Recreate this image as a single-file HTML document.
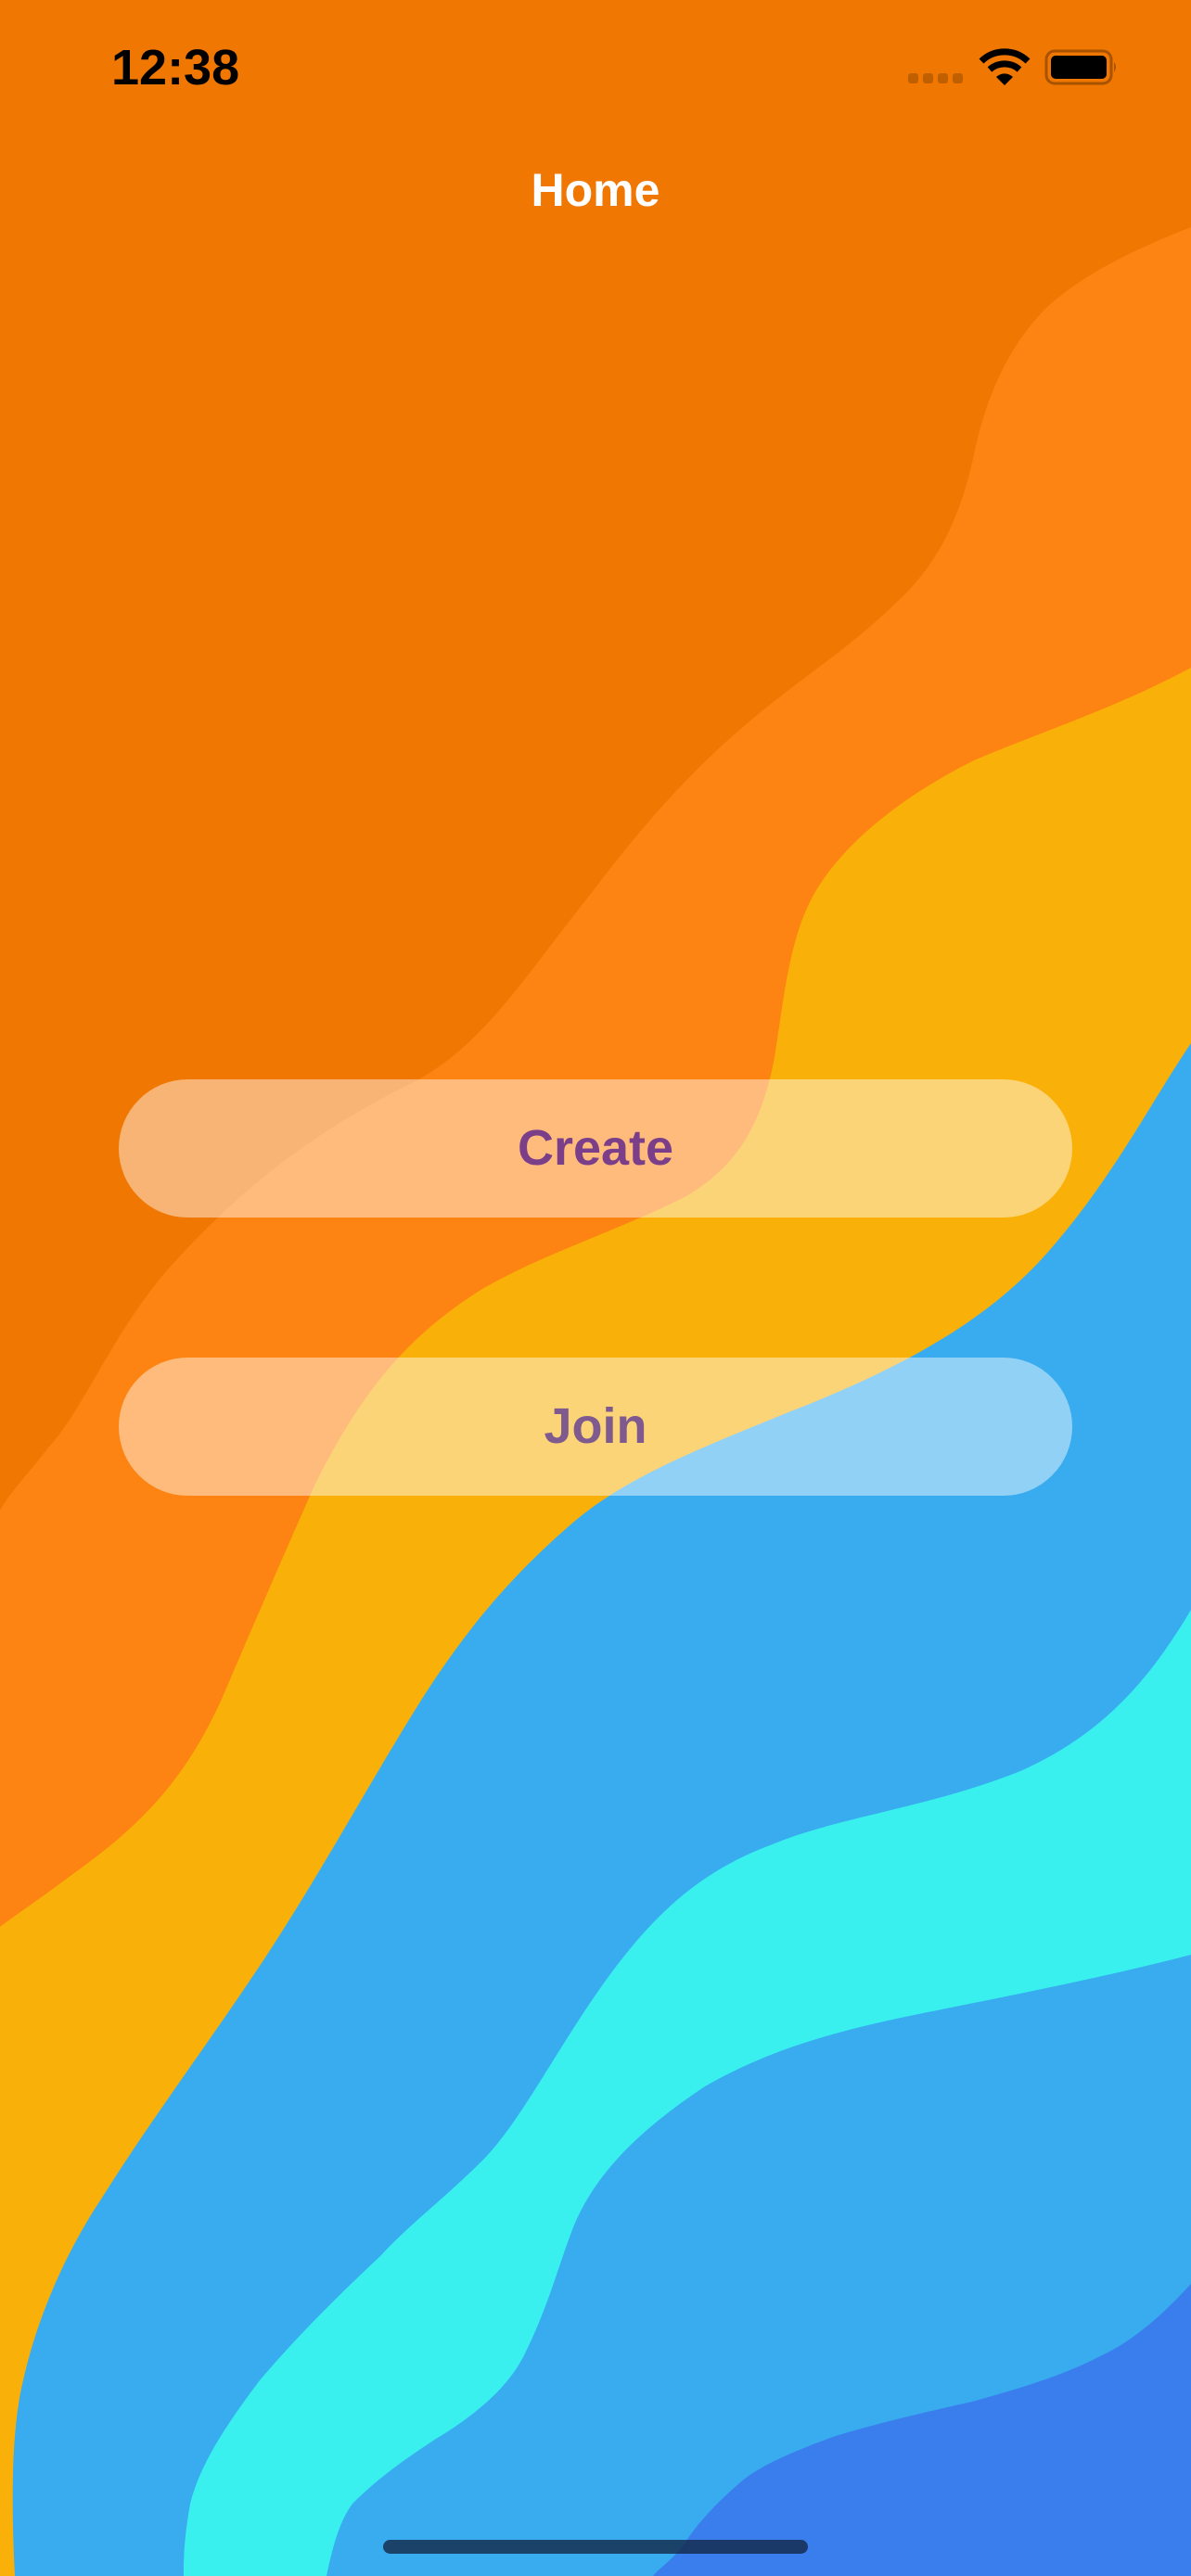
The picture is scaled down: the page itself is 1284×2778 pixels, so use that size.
<!DOCTYPE html>
<html><head><meta charset="utf-8"><style>
html,body{margin:0;padding:0}
body{width:1284px;height:2778px;position:relative;overflow:hidden;background:#F07702;font-family:"Liberation Sans",sans-serif}
svg.bg{position:absolute;left:0;top:0}
.time{position:absolute;left:120px;top:42px;font-size:54px;font-weight:bold;color:#000}
.title{position:absolute;left:0;width:1284px;top:176px;text-align:center;font-size:50px;font-weight:bold;color:#fff}
.btn{position:absolute;left:128px;width:1028px;height:149px;border-radius:75px;background:rgba(255,255,255,0.45);text-align:center;line-height:149px;font-size:54px;font-weight:bold}
.home{position:absolute;left:413px;top:2739px;width:458px;height:15px;border-radius:8px;background:rgba(20,40,70,0.8)}
</style></head><body>
<svg class="bg" width="1284" height="2778" viewBox="0 0 1284 2778">
<path fill="#FD8412" d="M1284,245 C1220,270 1170,295 1130,330 C1090,370 1065,420 1050,490 C1035,560 1010,610 966,650 C920,695 880,720 830,760 C760,815 700,880 640,960 C560,1060 520,1130 440,1170 C340,1220 260,1280 180,1370 C120,1440 90,1520 53,1560 C30,1590 10,1610 0,1629 L0,2778 L1284,2778 Z"/>
<path fill="#F9B10A" d="M1284,720 C1200,765 1120,790 1050,820 C970,860 910,910 880,960 C850,1010 845,1080 835,1140 C820,1220 790,1260 740,1290 C660,1330 590,1350 520,1390 C440,1440 390,1500 340,1600 C300,1690 270,1760 240,1830 C200,1920 150,1970 80,2020 C40,2050 10,2070 0,2078 L0,2778 L1284,2778 Z"/>
<path fill="#39ABEF" d="M1284,1125 C1240,1190 1200,1270 1130,1350 C1060,1430 960,1480 850,1523 C760,1560 680,1590 620,1640 C550,1700 500,1760 450,1840 C400,1920 340,2030 280,2120 C220,2210 160,2290 110,2370 C70,2430 40,2500 25,2567 C12,2620 12,2700 16,2778 L1284,2778 Z"/>
<path fill="#39F0EF" d="M1284,1736 C1240,1810 1190,1870 1100,1910 C1000,1950 900,1960 830,1990 C750,2020 700,2070 650,2140 C600,2210 560,2290 520,2330 C480,2370 440,2400 410,2433 C360,2480 320,2520 280,2567 C240,2620 215,2660 205,2700 C198,2740 198,2760 198,2778 L1284,2778 Z"/>
<path fill="#39ABEF" d="M352,2778 C358,2750 365,2720 380,2700 C410,2670 440,2650 470,2630 C520,2600 550,2570 565,2540 C590,2490 600,2450 615,2410 C640,2340 700,2290 760,2250 C830,2210 900,2190 1000,2170 C1100,2150 1200,2130 1284,2108 L1284,2778 Z"/>
<path fill="#3A7EEE" d="M1284,2463 C1250,2500 1220,2525 1188,2540 C1140,2565 1090,2578 1048,2590 C980,2605 930,2618 901,2627 C850,2645 820,2660 803,2673 C770,2700 745,2730 737,2745 C720,2765 710,2770 704,2778 L1284,2778 Z"/>
</svg>
<div class="time">12:38</div>
<svg style="position:absolute;left:975px;top:75px" width="65" height="20"><g fill="#B55A00" opacity="0.8"><rect x="4" y="4" width="11" height="11" rx="3"/><rect x="20" y="4" width="11" height="11" rx="3"/><rect x="36" y="4" width="11" height="11" rx="3"/><rect x="52" y="4" width="11" height="11" rx="3"/></g></svg>
<svg style="position:absolute;left:1055px;top:52px" width="56" height="42" viewBox="0 0 56 42"><path d="M3,14 A36,36 0 0 1 53,14" fill="none" stroke="#000" stroke-width="7"/><path d="M12,23 A24,24 0 0 1 44,23" fill="none" stroke="#000" stroke-width="7"/><path d="M19,31 L28,40 L37,31 A13,13 0 0 0 19,31 Z" fill="#000"/></svg>
<svg style="position:absolute;left:1125px;top:52px" width="82" height="42" viewBox="0 0 82 42"><rect x="3" y="3" width="70" height="35" rx="9" fill="none" stroke="#A85300" stroke-width="3"/><rect x="8" y="8" width="60" height="25" rx="5" fill="#000"/><path d="M76,15 Q80,20 76,26 Z" fill="#A85300"/></svg>
<div class="title">Home</div>
<div class="btn" style="top:1164px;color:#7B3F8A">Create</div>
<div class="btn" style="top:1464px;color:#7E5A8E">Join</div>
<div class="home"></div>
</body></html>
